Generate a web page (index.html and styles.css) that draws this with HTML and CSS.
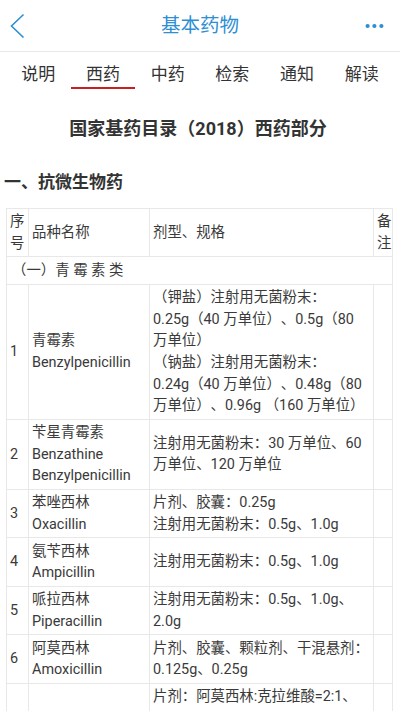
FILE: index.html
```html
<!DOCTYPE html>
<html lang="zh-CN">
<head>
<meta charset="utf-8">
<title>基本药物</title>
<link rel="stylesheet" href="styles.css">
</head>
<body>
<header class="topbar">
  <div class="back">
    <svg width="16" height="26" viewBox="0 0 16 26"><polyline points="13.5,1.5 1.5,13 13.5,24.5" fill="none" stroke="#2e8fd4" stroke-width="1.6" stroke-linejoin="miter"/></svg>
  </div>
  <div class="title">基本药物</div>
  <div class="more">
    <svg width="20" height="6" viewBox="0 0 20 6"><circle cx="2.6" cy="3" r="2.1" fill="#2e8fd4"/><circle cx="9.4" cy="3" r="2.1" fill="#2e8fd4"/><circle cx="16.4" cy="3" r="2.1" fill="#2e8fd4"/></svg>
  </div>
</header>
<nav class="tabs">
  <div class="tab">说明</div>
  <div class="tab active">西药</div>
  <div class="tab">中药</div>
  <div class="tab">检索</div>
  <div class="tab">通知</div>
  <div class="tab">解读</div>
</nav>
<main class="content">
  <h1 class="doc-title">国家基药目录（2018）西药部分</h1>
  <h2 class="section">一、抗微生物药</h2>
  <table class="drugs">
    <colgroup>
      <col class="c-no"><col class="c-name"><col class="c-spec"><col class="c-note">
    </colgroup>
    <tr>
      <td>序号</td><td>品种名称</td><td>剂型、规格</td><td>备注</td>
    </tr>
    <tr>
      <td colspan="4" class="cat">（一）青 霉 素 类</td>
    </tr>
    <tr>
      <td>1</td>
      <td>青霉素<br>Benzylpenicillin</td>
      <td>（钾盐）注射用无菌粉末：<br>0.25g（40 万单位）、0.5g（80 万单位）<br>（钠盐）注射用无菌粉末：<br>0.24g（40 万单位）、0.48g（80 万单位）、0.96g （160 万单位）</td>
      <td></td>
    </tr>
    <tr>
      <td>2</td>
      <td>苄星青霉素<br>Benzathine Benzylpenicillin</td>
      <td>注射用无菌粉末：30 万单位、60 万单位、120 万单位</td>
      <td></td>
    </tr>
    <tr>
      <td>3</td>
      <td>苯唑西林<br>Oxacillin</td>
      <td>片剂、胶囊：0.25g<br>注射用无菌粉末：0.5g、1.0g</td>
      <td></td>
    </tr>
    <tr>
      <td>4</td>
      <td>氨苄西林<br>Ampicillin</td>
      <td>注射用无菌粉末：0.5g、1.0g</td>
      <td></td>
    </tr>
    <tr>
      <td>5</td>
      <td>哌拉西林<br>Piperacillin</td>
      <td>注射用无菌粉末：0.5g、1.0g、2.0g</td>
      <td></td>
    </tr>
    <tr>
      <td>6</td>
      <td>阿莫西林<br>Amoxicillin</td>
      <td>片剂、胶囊、颗粒剂、干混悬剂：0.125g、0.25g</td>
      <td></td>
    </tr>
    <tr>
      <td>7</td>
      <td>阿莫西林克拉维酸钾<br>Amoxicillin and Clavulanate Potassium</td>
      <td>片剂：阿莫西林:克拉维酸=2:1、4:1、7:1<br>干混悬剂：阿莫西林:克拉维酸=2:1、4:1、7:1<br>颗粒剂：阿莫西林:克拉维酸=4:1、7:1<br>注射用无菌粉末：阿莫西林:克拉维酸=5:1、10:1</td>
      <td></td>
    </tr>
  </table>
</main>
</body>
</html>
```
FILE: styles.css
```css
html, body {
  margin: 0;
  padding: 0;
  background: #fff;
}
body {
  font-family: Roboto, "Noto Sans CJK SC", sans-serif;
  color: #333;
  width: 400px;
  overflow: hidden;
  text-spacing-trim: space-all;
}
.topbar {
  display: grid;
  grid-template-columns: 1fr auto 1fr;
  align-items: center;
  height: 52px;
  border-bottom: 1px solid #e8e8e8;
  box-sizing: border-box;
}
.back {
  padding-left: 10px;
  display: flex;
  align-items: center;
}
.back svg { display: block; }
.title {
  font-size: 19.5px;
  color: #2e8fd4;
  line-height: 26px;
}
.more {
  display: flex;
  justify-content: flex-end;
  padding-right: 15px;
}
.more svg { display: block; }
.tabs {
  display: flex;
  padding: 0 6px;
}
.tab {
  flex: 1;
  text-align: center;
  font-size: 17px;
  line-height: 22px;
  padding-top: 11px;
  padding-bottom: 2px;
  border-bottom: 2.5px solid transparent;
  color: #333;
}
.tab.active {
  border-bottom-color: #c8201f;
}
.content {
  padding: 0 8px 0 4px;
}
.doc-title {
  margin: 27px 0 0;
  font-size: 18px;
  line-height: 26px;
  font-weight: bold;
  text-align: center;
  color: #333;
}
.section {
  margin: 27px 0 0;
  font-size: 17px;
  line-height: 26px;
  font-weight: bold;
  color: #333;
}
.drugs {
  margin: 13px 0 0 2px;
  border-collapse: collapse;
  table-layout: fixed;
  width: 386px;
  font-size: 14.4px;
  line-height: 21.6px;
  color: #3a3a3a;
}
.c-no { width: 22px; }
.c-name { width: 121px; }
.c-spec { width: 224px; }
.c-note { width: 19px; }
.drugs td {
  border: 1px solid #e8e8e8;
  padding: 2.15px 3px;
  vertical-align: middle;
  word-wrap: break-word;
}
.drugs td.cat {
  padding: 2.5px 3px 2.5px 5px;
}
```
